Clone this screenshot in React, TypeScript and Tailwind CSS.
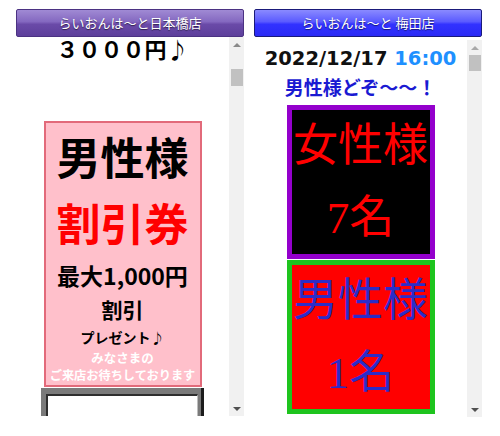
import React from "react";

function Scrollbar({ thumbClass, upColor }: { thumbClass: string; upColor: string }) {
  return (
    <div className="w-[15px] shrink-0 bg-[#f1f1f1] flex flex-col items-center">
      <div className="h-[15px] w-full flex items-center justify-center">
        <div
          className={
            "w-0 h-0 border-l-[4px] border-r-[4px] border-b-[4px] border-l-transparent border-r-transparent " +
            upColor
          }
        />
      </div>
      <div className={"w-[12px] bg-[#c1c1c1] " + thumbClass} />
      <div className="mt-auto h-[15px] w-full flex items-center justify-center">
        <div className="w-0 h-0 border-l-[4px] border-r-[4px] border-t-[4px] border-l-transparent border-r-transparent border-t-[#505050]" />
      </div>
    </div>
  );
}

const jp = "font-['Noto_Sans_CJK_JP',sans-serif]";

export default function App() {
  return (
    <div className={"w-[500px] h-[436px] bg-white flex gap-[10px] pl-[16px] pt-[9px] " + jp}>
      {/* Left panel */}
      <div className="w-[228px] flex flex-col">
        <div className="h-[28px] rounded-[2px] border border-[#4b3282] bg-[linear-gradient(to_bottom,#a08ad4_0%,#8468c0_45%,#6a4aa8_55%,#5d3f9b_100%)] flex items-center justify-center text-white text-[13px] [text-shadow:0_1px_1px_rgba(0,0,0,0.55)]">
          らいおんは〜と日本橋店
        </div>
        <div className="h-[379px] w-[228px] flex">
          <div className="w-[213px]">
            <div className="text-center text-[22px] leading-[22px] font-bold text-black">
              ３０００円♪
            </div>
            <div className="mt-[62px] mx-auto w-[158px] border-2 border-[#e26a7a] bg-[#ffc0cb] text-center font-bold pb-[1px]">
              <div className="text-[44px] leading-[66px] text-black">男性様</div>
              <div className="text-[44px] leading-[66px] text-[#ff0000]">割引券</div>
              <div className="mt-[3px] text-[23px] leading-[34px] text-black">最大1,000円</div>
              <div className="text-[21px] leading-[34px] text-black">割引</div>
              <div className="text-[14px] leading-[23px] text-black">プレゼント♪</div>
              <div className="text-[12.5px] leading-[17px] text-white">みなさまの</div>
              <div className="text-[12.2px] leading-[18px] text-white whitespace-nowrap">
                ご来店お待ちしております
              </div>
            </div>
            <div className="mt-[1px] mx-auto w-[163px] h-[28px] bg-[#7a7a7a] border-r-[3px] border-r-[#1c1c1c] pl-[5px] pt-[6px] pr-[3px]">
              <div className="h-full bg-white border-t-2 border-l-2 border-t-[#2e2e2e] border-l-[#2e2e2e] border-r border-r-[#bdbdbd]" />
            </div>
          </div>
          <Scrollbar thumbClass="mt-[17px] h-[17px]" upColor="border-b-[#8a8a8a]" />
        </div>
      </div>

      {/* Right panel */}
      <div className="w-[228px] flex flex-col">
        <div className="h-[28px] rounded-[2px] border border-[#1a1a7a] bg-[linear-gradient(to_bottom,#8a8aff_0%,#5a5aff_45%,#3232ff_55%,#2a2af5_100%)] flex items-center justify-center text-white text-[13px] [text-shadow:0_1px_1px_rgba(0,0,0,0.55)]">
          らいおんは〜と 梅田店
        </div>
        <div className="mt-[3px] h-[377px] w-[228px] flex">
          <div className="w-[213px] overflow-hidden">
            <div className="pt-[6px] text-center text-[19.5px] leading-[26px] font-bold font-['DejaVu_Sans','Noto_Sans_CJK_JP',sans-serif] text-[#111] whitespace-nowrap">
              2022/12/17 <span className="text-[#1e90ff]">16:00</span>
            </div>
            <div className="text-center text-[19px] leading-[30px] font-bold text-[#1a1ad2]">
              男性様どぞ〜〜！
            </div>
            <div className="mt-[3px] mx-auto w-[148px] border-[5px] border-[#9400cc] bg-black text-center text-[45px] leading-[72px] text-[#ff0000] font-['Liberation_Serif','Noto_Sans_CJK_JP',serif]">
              <div>女性様</div>
              <div>7名</div>
            </div>
            <div className="mt-[1px] mx-auto w-[148px] border-[5px] border-[#1ec41e] bg-[#ff0000] text-center text-[45px] leading-[72px] text-[#2c2cc8] font-['Liberation_Serif','Noto_Sans_CJK_JP',serif]">
              <div>男性様</div>
              <div>1名</div>
            </div>
          </div>
          <Scrollbar thumbClass="mt-0 h-[16px]" upColor="border-b-[#a8a8a8]" />
        </div>
      </div>
    </div>
  );
}
